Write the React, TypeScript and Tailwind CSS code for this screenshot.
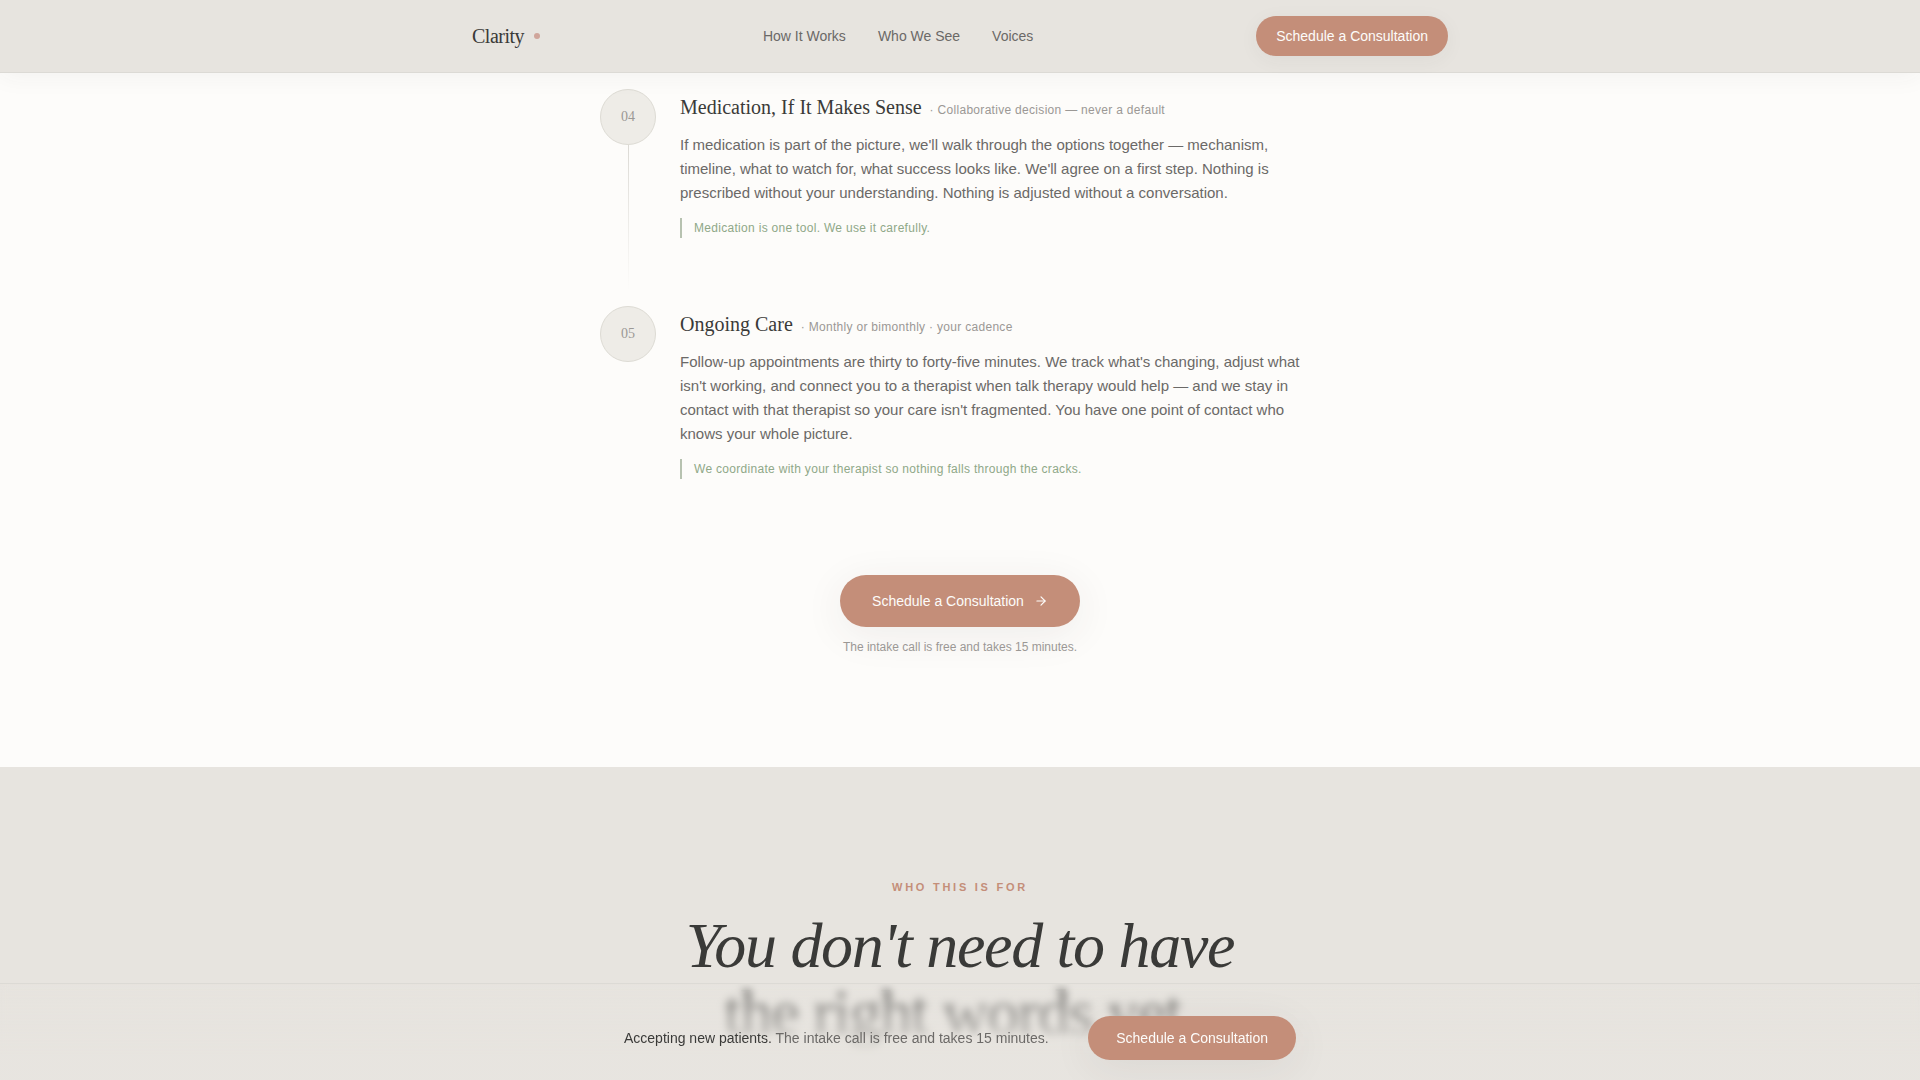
import React from "react";
import { ArrowRight } from "lucide-react";

const navLinks = [
  { label: "How It Works", href: "#how-it-works" },
  { label: "Who We See", href: "#who-we-see" },
  { label: "Voices", href: "#voices" },
];

const steps = [
  {
    number: "04",
    title: "Medication, If It Makes Sense",
    meta: "Collaborative decision — never a default",
    body: "If medication is part of the picture, we'll walk through the options together — mechanism, timeline, what to watch for, what success looks like. We'll agree on a first step. Nothing is prescribed without your understanding. Nothing is adjusted without a conversation.",
    note: "Medication is one tool. We use it carefully.",
  },
  {
    number: "05",
    title: "Ongoing Care",
    meta: "Monthly or bimonthly · your cadence",
    body: "Follow-up appointments are thirty to forty-five minutes. We track what's changing, adjust what isn't working, and connect you to a therapist when talk therapy would help — and we stay in contact with that therapist so your care isn't fragmented. You have one point of contact who knows your whole picture.",
    note: "We coordinate with your therapist so nothing falls through the cracks.",
  },
];

function Header() {
  return (
    <header className="sticky top-0 z-20 border-b border-[#dcdad5] bg-[#e7e4df] shadow-[0_4px_24px_rgba(58,56,53,0.05)]">
      <div className="mx-auto flex h-18 max-w-5xl items-center justify-between px-6">
        <a href="#top" className="flex items-center gap-2.5 font-['Liberation_Serif',serif] text-xl tracking-tight text-[#3a3a38]">
          Clarity
          <span className="size-1.5 rounded-full bg-[#d0a59b]" aria-hidden />
        </a>
        <nav className="flex items-center gap-8">
          {navLinks.map((link) => (
            <a key={link.href} href={link.href} className="text-sm text-[#6b6967]">
              {link.label}
            </a>
          ))}
        </nav>
        <button
          type="button"
          className="h-10 rounded-full bg-[#c48e79] px-5 text-sm text-[#fdfcfa] shadow-[0_4px_20px_rgba(58,56,53,0.05)]"
        >
          Schedule a Consultation
        </button>
      </div>
    </header>
  );
}

function Step({ step, isLast }: { step: (typeof steps)[number]; isLast: boolean }) {
  return (
    <li className="flex gap-6">
      <div className="flex flex-col items-center">
        <span className="flex size-14 shrink-0 items-center justify-center rounded-full border border-[#dddbd4] bg-[#eeece7] font-['Liberation_Serif',serif] text-sm text-[#9b9895]">
          {step.number}
        </span>
        {!isLast && <span className="mb-4 w-px flex-1 bg-linear-to-b from-[#dcdad5] to-transparent" aria-hidden />}
      </div>
      <div className={isLast ? "flex-1 pt-1" : "flex-1 pt-1 pb-[68px]"}>
        <div className="flex flex-wrap items-baseline gap-2">
          <h3 className="font-['Liberation_Serif',serif] text-xl text-[#3a3a38]">{step.title}</h3>
          <span className="text-xs tracking-wide text-[#9b9895]">· {step.meta}</span>
        </div>
        <p className="mt-3 text-[15px] leading-6 text-[#6b6967]">{step.body}</p>
        <p className="mt-[13px] border-l-2 border-[#b7c2b0] pl-3 text-xs leading-5 tracking-wide text-[#8fa888]">
          {step.note}
        </p>
      </div>
    </li>
  );
}

function StickyBar() {
  return (
    <aside className="fixed inset-x-0 bottom-0 z-20 border-t border-[#dcdad5] bg-linear-to-b from-[#e7e4df]/20 to-[#e7e4df]/95 to-75% px-6 pt-8 pb-5 backdrop-blur-xs">
      <div className="mx-auto flex max-w-2xl items-center justify-between gap-8">
        <p className="text-sm text-[#6b6967]">
          <span className="text-[#3a3a38]">Accepting new patients.</span> The intake call is free and takes 15 minutes.
        </p>
        <button
          type="button"
          className="h-11 shrink-0 rounded-full bg-[#c48e79] px-7 text-sm text-[#fdfcfa] shadow-[0_8px_40px_rgba(58,56,53,0.08)]"
        >
          Schedule a Consultation
        </button>
      </div>
    </aside>
  );
}

export default function App() {
  return (
    <div id="top" className="flex min-h-screen flex-col bg-[#fdfcfa] font-['Liberation_Sans',sans-serif]">
      <Header />

      <main className="flex flex-1 flex-col">
        <section id="how-it-works" className="px-6 pt-4 pb-28">
          <ol className="mx-auto max-w-[720px]">
            {steps.map((step, i) => (
              <Step key={step.number} step={step} isLast={i === steps.length - 1} />
            ))}
          </ol>

          <div className="mt-24 flex flex-col items-center gap-3">
            <button
              type="button"
              className="flex h-13 items-center gap-2.5 rounded-full bg-[#c48e79] px-8 text-sm text-[#fdfcfa] shadow-[0_8px_40px_rgba(58,56,53,0.08)]"
            >
              Schedule a Consultation
              <ArrowRight size={14} aria-hidden />
            </button>
            <p className="text-xs text-[#9b9895]">The intake call is free and takes 15 minutes.</p>
          </div>
        </section>

        <section id="who-we-see" className="flex-1 bg-[#e7e4df] px-6 pt-28 text-center">
          <p className="text-[11px] leading-4 font-bold tracking-[0.25em] text-[#c48e79] uppercase">Who this is for</p>
          <h2 className="mt-[17px] font-['Liberation_Serif',serif] text-[64px] leading-[67px] tracking-[-0.02em] text-[#3a3a38]">
            <em>You don't need to have</em>
            <br />
            the right words yet.
          </h2>
        </section>
      </main>

      <StickyBar />
    </div>
  );
}
